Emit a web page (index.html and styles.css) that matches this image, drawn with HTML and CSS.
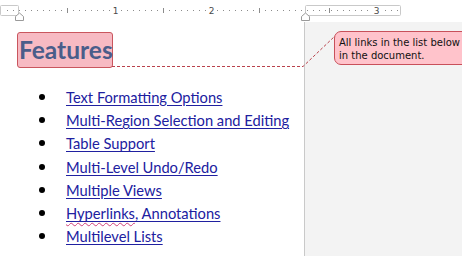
FILE: index.html
```html
<!DOCTYPE html>
<html lang="en">
<head>
<meta charset="utf-8">
<title>Features</title>
<link rel="stylesheet" href="styles.css">
</head>
<body>
<div class="ruler">
  <svg width="462" height="22" viewBox="0 0 462 22">
    <defs>
      <pattern id="dots" x="1" y="0" width="6" height="22" patternUnits="userSpaceOnUse">
        <rect x="0" y="10" width="1" height="1" fill="#8c8c8c"/>
      </pattern>
    </defs>
    <rect x="0.5" y="5.5" width="18" height="10" rx="1" fill="#fff" stroke="#c9c9c9"/>
    <rect x="305.5" y="5.5" width="95" height="10" rx="1" fill="#fff" stroke="#c9c9c9"/>
    <rect x="2" y="8" width="400" height="5" fill="url(#dots)"/>
    <rect x="110" y="6" width="11" height="9" fill="#fff"/>
    <rect x="206" y="6" width="11" height="9" fill="#fff"/>
    <rect x="371" y="6" width="11" height="9" fill="#fff"/>
    <rect x="67" y="8" width="1" height="5" fill="#8c8c8c"/>
    <rect x="163" y="8" width="1" height="5" fill="#8c8c8c"/>
    <rect x="259" y="8" width="1" height="5" fill="#8c8c8c"/>
    <rect x="329" y="8" width="1" height="5" fill="#8c8c8c"/>
    <text x="115.5" y="14" class="rnum">1</text>
    <text x="211.5" y="14" class="rnum">2</text>
    <text x="376.5" y="14" class="rnum">3</text>
    <path d="M15.5 20.5 V16.5 L19.5 13 L23.5 16.5 V20.5 Z" fill="#fff" stroke="#9a9a9a"/>
    <path d="M301.5 20.5 V16.5 L305.5 13 L309.5 16.5 V20.5 Z" fill="#fff" stroke="#9a9a9a"/>
  </svg>
</div>
<div class="doc">
  <main class="page">
    <h1 class="heading"><span class="mark">Features</span></h1>
    <ul class="features">
      <li><a href="#formatting">Text Formatting Options</a></li>
      <li><a href="#selection">Multi-Region Selection and Editing</a></li>
      <li><a href="#tables">Table Support</a></li>
      <li><a href="#undo">Multi-Level Undo/Redo</a></li>
      <li><a href="#views">Multiple Views</a></li>
      <li><a href="#links"><span class="typo">Hyperlinks</span>, Annotations</a></li>
      <li><a href="#lists">Multilevel Lists</a></li>
    </ul>
  </main>
  <aside class="pane">
    <div class="bubble">All links in the list below<br>in the document.</div>
  </aside>
  <svg class="connector" width="462" height="60" viewBox="0 0 462 60">
    <path d="M112 44.5 H303 L335 14" fill="none" stroke="#b9424c" stroke-width="1" stroke-dasharray="3 2"/>
  </svg>
</div>
</body>
</html>
```
FILE: styles.css
```css
* { box-sizing: border-box; }
html, body {
  margin: 0;
  padding: 0;
  background: #fff;
  width: 462px;
  height: 256px;
  overflow: hidden;
}
.ruler {
  height: 22px;
  background: #fff;
}
.ruler svg { display: block; }
.rnum {
  font-family: "DejaVu Sans", sans-serif;
  font-size: 9px;
  fill: #4a4a4a;
  text-anchor: middle;
}
.doc {
  position: relative;
  display: flex;
  height: 234px;
}
.page {
  width: 305px;
  flex: none;
  border-right: 1px solid #c9c9c9;
  padding-top: 10px;
  padding-left: 17px;
}
.heading {
  margin: 0;
  font-family: "Lato", sans-serif;
  font-weight: 700;
  font-size: 24.5px;
  line-height: 34px;
  color: #4a5d8a;
}
.mark {
  display: inline-block;
  padding: 0 0 0 1px;
  height: 36px;
  width: 96px;
  background: #f7bac3;
  border: 1px solid #c9565e;
  border-radius: 3px;
}
.features {
  list-style: none;
  margin: 17px 0 0 0;
  padding: 0;
}
.features li {
  display: flex;
  align-items: center;
  height: 23.3px;
  font-family: "Lato", sans-serif;
  font-size: 14.7px;
}
.features li::before {
  content: "";
  flex: none;
  width: 6px;
  height: 6px;
  border-radius: 50%;
  background: #000;
  margin-left: 22px;
  margin-right: 21px;
}
.features a {
  color: #2020a0;
  text-decoration: underline;
  text-underline-offset: 2px;
}
.typo {
  text-decoration: underline wavy #d0407a;
  text-decoration-thickness: 1px;
  text-underline-offset: 3px;
}
.pane {
  flex: 1;
  background: #f3f3f3;
  overflow: hidden;
  padding-top: 9px;
  padding-left: 29px;
}
.bubble {
  width: 200px;
  height: 34px;
  background: #ffc3cb;
  border: 1px solid #c8505a;
  border-radius: 7px;
  padding: 4px 0 0 4px;
  font-family: "DejaVu Sans", sans-serif;
  font-size: 10px;
  line-height: 13px;
  color: #111;
  white-space: nowrap;
}
.connector {
  position: absolute;
  left: 0;
  top: 0;
  pointer-events: none;
}
```
